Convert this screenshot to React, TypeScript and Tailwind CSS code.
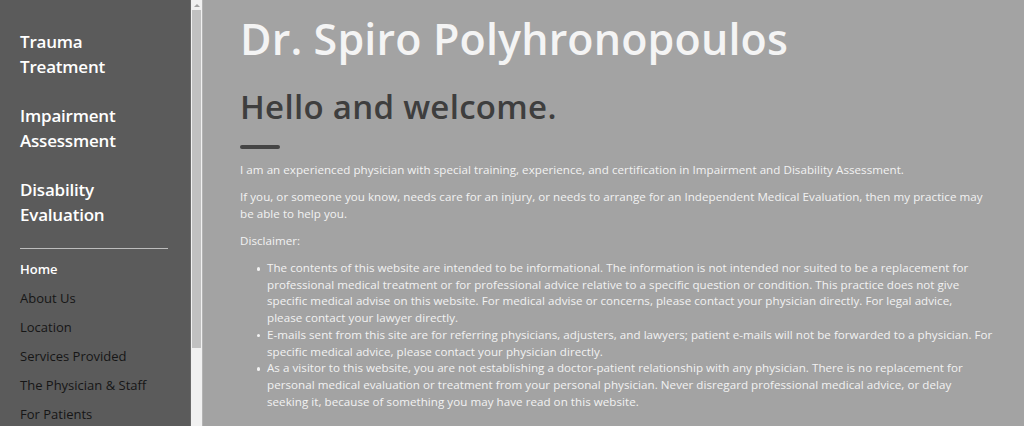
import React from 'react';

const services = [
  ['Trauma', 'Treatment'],
  ['Impairment', 'Assessment'],
  ['Disability', 'Evaluation'],
];

const nav = ['Home', 'About Us', 'Location', 'Services Provided', 'The Physician & Staff', 'For Patients'];

// kept line by line so the wrapping follows the original page
const disclaimers = [
  [
    'The contents of this website are intended to be informational. The information is not intended nor suited to be a replacement for',
    'professional medical treatment or for professional advice relative to a specific question or condition. This practice does not give',
    'specific medical advise on this website. For medical advise or concerns, please contact your physician directly. For legal advice,',
    'please contact your lawyer directly.',
  ],
  [
    'E-mails sent from this site are for referring physicians, adjusters, and lawyers; patient e-mails will not be forwarded to a physician. For',
    'specific medical advice, please contact your physician directly.',
  ],
  [
    'As a visitor to this website, you are not establishing a doctor-patient relationship with any physician. There is no replacement for',
    'personal medical evaluation or treatment from your personal physician. Never disregard professional medical advice, or delay',
    'seeking it, because of something you may have read on this website.',
  ],
];

function Lines({ lines }: { lines: string[] }) {
  return (
    <>
      {lines.map((l, i) => (
        <React.Fragment key={i}>
          {i > 0 && <br />}
          {l}
        </React.Fragment>
      ))}
    </>
  );
}

export default function App() {
  return (
    <div className="flex h-[426px] w-[1024px] overflow-hidden font-['Open_Sans',sans-serif]">
      {/* Sidebar */}
      <aside className="w-[190px] shrink-0 bg-[#5b5b5b] pl-5 pr-[22px] pt-[30px]">
        <div className="flex flex-col gap-[25px]">
          {services.map((s) => (
            <div key={s[0]} className="text-[17px] leading-[24.5px] font-semibold text-white tracking-[-0.2px]">
              <div>{s[0]}</div>
              <div>{s[1]}</div>
            </div>
          ))}
        </div>
        <div className="mt-[21px] h-px bg-[#bdbdbd]" />
        <ul className="mt-[12px] flex flex-col">
          {nav.map((n, i) => (
            <li
              key={n}
              className={`h-[29px] text-[13px] leading-[16px] ${i === 0 ? 'font-semibold text-white' : 'text-[#161616]'}`}
            >
              {n}
            </li>
          ))}
        </ul>
      </aside>

      {/* Sidebar scrollbar */}
      <div className="w-[12px] shrink-0 bg-[#f1f1f1] border-l border-[#6a6a6a] flex flex-col">
        <div className="h-[10px] flex items-center justify-center">
          <div className="w-0 h-0 border-l-[3px] border-r-[3px] border-b-[3px] border-l-transparent border-r-transparent border-b-[#a3a3a3]" />
        </div>
        <div className="mx-[1px] h-[338px] bg-[#c1c1c1]" />
      </div>

      {/* Main */}
      <main className="flex-1 bg-[#a3a3a3] border-l border-[#b4b4b4] pl-[37px] pr-[16px] pt-[9px]">
        <h1 className="text-[43px] leading-[60px] font-semibold text-[#f4f4f4] tracking-[0.15px]">
          Dr. Spiro Polyhronopoulos
        </h1>
        <h2 className="mt-[16px] text-[33px] leading-[44px] font-semibold text-[#3e3e3e] tracking-[0.3px]">
          Hello and welcome.
        </h2>
        <div className="mt-[16px] h-[4px] w-[40px] rounded-full bg-[#454545]" />
        <div className="mt-[12px] text-[11.6px] leading-[17.5px] tracking-[0.04px] text-[#f2f2f2]">
          <p>
            I am an experienced physician with special training, experience, and certification in Impairment and
            Disability Assessment.
          </p>
          <p className="mt-[9px]">
            <Lines
              lines={[
                'If you, or someone you know, needs care for an injury, or needs to arrange for an Independent Medical Evaluation, then my practice may',
                'be able to help you.',
              ]}
            />
          </p>
          <p className="mt-[9px]">Disclaimer:</p>
          <ul className="mt-[11px] flex flex-col leading-[16.7px]">
            {disclaimers.map((d) => (
              <li key={d[0].slice(0, 12)} className="flex">
                <span className="w-[27px] shrink-0 flex justify-end pr-[7px] pt-[7px]">
                  <span className="h-[3.5px] w-[3.5px] rounded-full bg-[#f2f2f2]" />
                </span>
                <span>
                  <Lines lines={d} />
                </span>
              </li>
            ))}
          </ul>
        </div>
      </main>
    </div>
  );
}
